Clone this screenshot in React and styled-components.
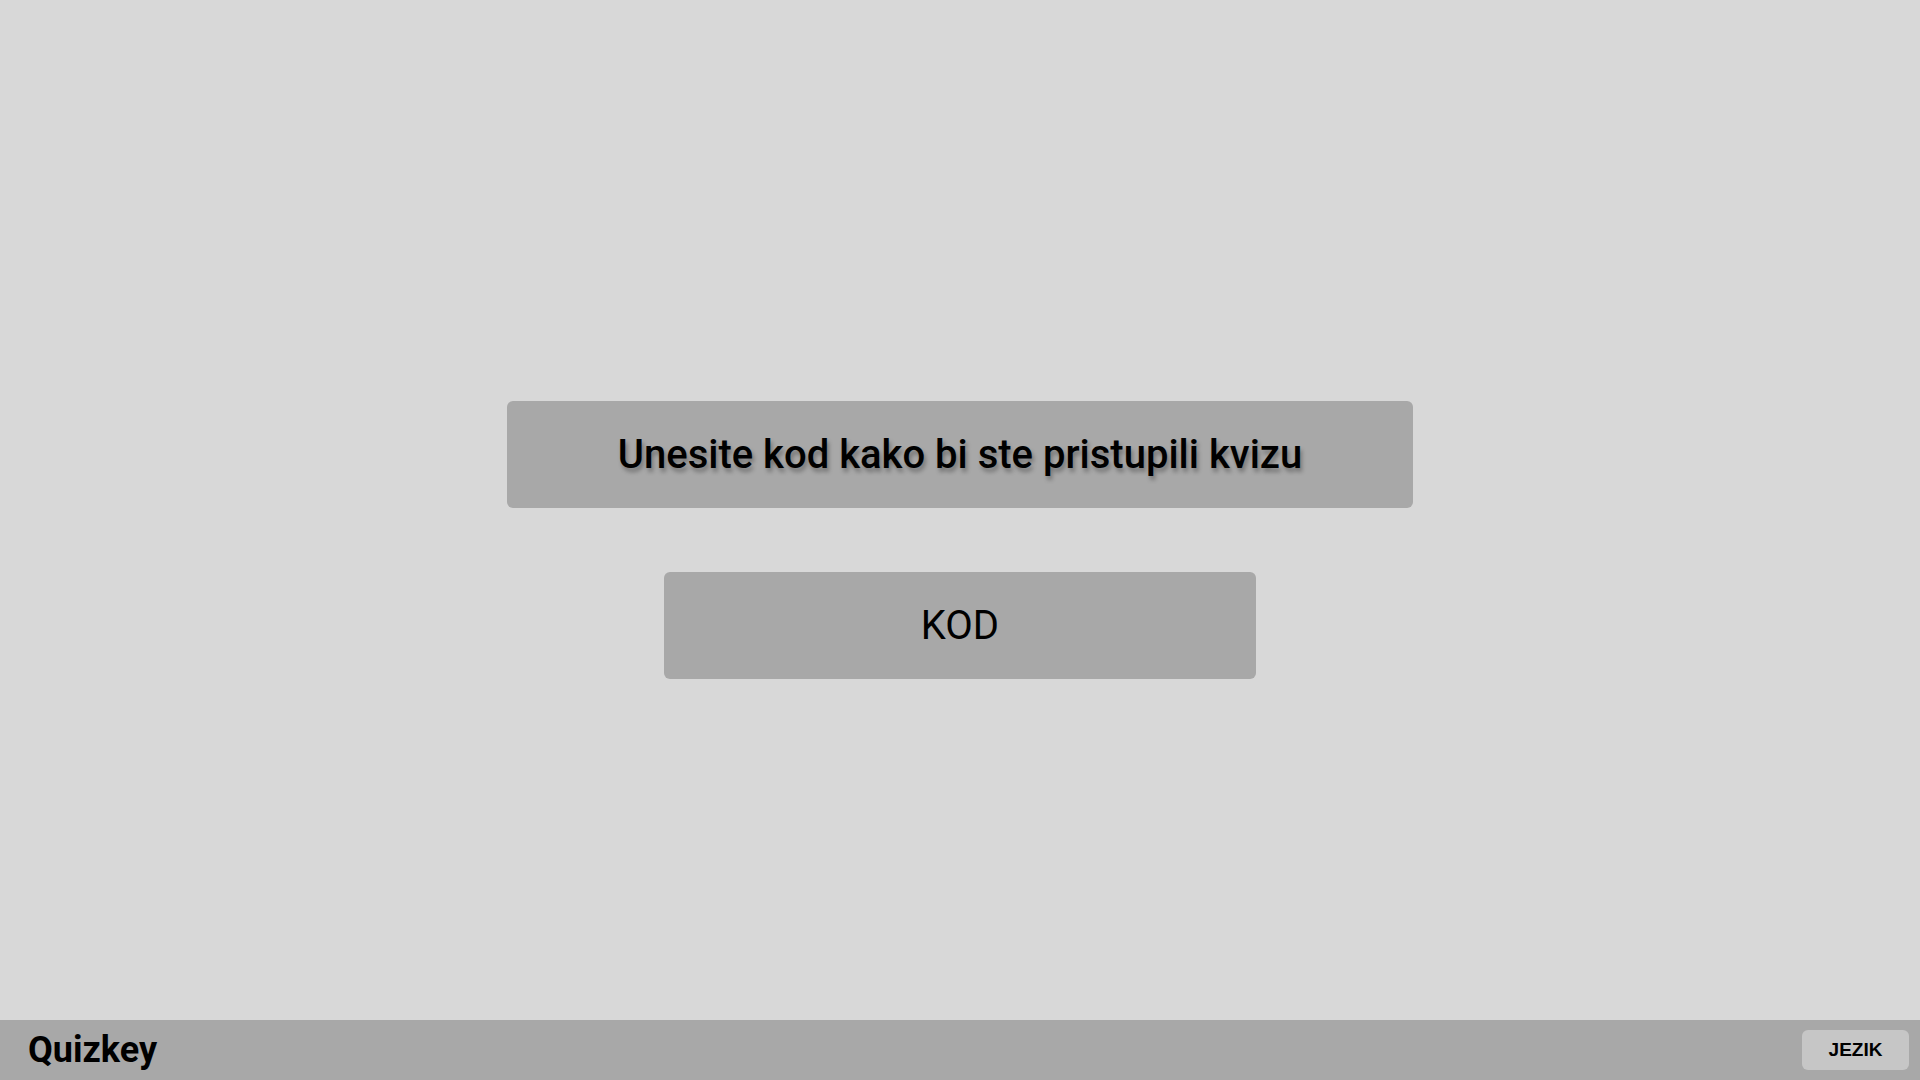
import React from "react";
import styled, { createGlobalStyle } from "styled-components";

const GlobalStyle = createGlobalStyle`
  html, body {
    margin: 0;
    padding: 0;
    background: #d8d8d8;
    font-family: Roboto, "Noto Sans", sans-serif;
  }
  * { box-sizing: border-box; }
`;

const Page = styled.div`
  display: grid;
  grid-template-rows: 1fr 60px;
  height: 100vh;
  background: #d8d8d8;
`;

const Main = styled.main`
  display: flex;
  flex-direction: column;
  align-items: center;
  justify-content: center;
  gap: 64px;
  padding-top: 60px;
`;

const Panel = styled.div`
  display: flex;
  align-items: center;
  justify-content: center;
  width: ${(p) => p.$width}px;
  height: 107px;
  background: #a8a8a8;
  border-radius: 6px;
  color: #000;
`;

const Title = styled.h1`
  margin: 0;
  font-family: Roboto, sans-serif;
  font-size: 40px;
  font-weight: 500;
  text-shadow: 2px 4px 4px rgba(0, 0, 0, 0.3);
`;

const CodeLabel = styled.span`
  font-family: Roboto, sans-serif;
  font-size: 40px;
  font-weight: 400;
`;

const Footer = styled.footer`
  display: flex;
  align-items: center;
  justify-content: space-between;
  padding: 0 11px 0 28px;
  background: #a8a8a8;
`;

const Brand = styled.div`
  font-family: Roboto, sans-serif;
  font-size: 36px;
  font-weight: 700;
  color: #000;
`;

const LangButton = styled.button`
  width: 107px;
  height: 40px;
  border: none;
  border-radius: 6px;
  background: #c6c6c6;
  color: #000;
  font-family: "Liberation Sans", Arial, sans-serif;
  font-size: 19px;
  font-weight: 700;
  cursor: pointer;
`;

export default function App() {
  return (
    <>
      <GlobalStyle />
      <Page>
        <Main>
          <Panel $width={906}>
            <Title>Unesite kod kako bi ste pristupili kvizu</Title>
          </Panel>
          <Panel $width={592}>
            <CodeLabel>KOD</CodeLabel>
          </Panel>
        </Main>
        <Footer>
          <Brand>Quizkey</Brand>
          <LangButton>JEZIK</LangButton>
        </Footer>
      </Page>
    </>
  );
}
